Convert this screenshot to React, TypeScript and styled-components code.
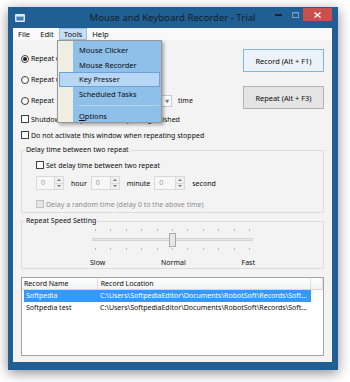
import React from "react";
import styled, { createGlobalStyle } from "styled-components";

const GlobalStyle = createGlobalStyle`
  html, body {
    margin: 0;
    padding: 0;
    background: #ffffff;
  }
  body {
    font-family: "Noto Sans", "Open Sans", "DejaVu Sans", sans-serif;
    font-size: 7px;
    color: #0c0c0c;
  }
  * {
    box-sizing: border-box;
  }
`;

const Page = styled.div`
  width: 350px;
  height: 382px;
  padding: 7px 0 0 8px;
  overflow: hidden;
`;

const Window = styled.div`
  width: 330px;
  height: 363px;
  display: flex;
  flex-direction: column;
  padding: 0 6px 8px 5px;
  background: #1f5f93;
  box-shadow: 0 3px 12px rgba(0, 0, 0, 0.45);
`;

const TitleBar = styled.div`
  height: 21px;
  flex-shrink: 0;
  display: grid;
  grid-template-columns: 1fr auto 1fr;
  align-items: center;
`;

const AppIcon = styled.svg`
  margin-left: 2px;
  display: block;
`;

const Title = styled.div`
  font-size: 9.6px;
  color: #16202a;
  white-space: nowrap;
`;

const Controls = styled.div`
  justify-self: end;
  align-self: start;
  margin-top: 1px;
  display: flex;
`;

const CtrlButton = styled.div<{ $close?: boolean; $w: number }>`
  width: ${(p) => p.$w}px;
  height: 13px;
  display: flex;
  align-items: center;
  justify-content: center;
  background: ${(p) => (p.$close ? "#c9504d" : "transparent")};
`;

const Client = styled.div`
  position: relative;
  flex: 1;
  min-height: 0;
  display: flex;
  flex-direction: column;
  background: #f3f3f3;
`;

const MenuBar = styled.div`
  height: 12px;
  flex-shrink: 0;
  display: flex;
  background: #f9f9f9;
  font-size: 7.6px;
  line-height: 12px;
`;

const MenuTitle = styled.div<{ $open?: boolean }>`
  padding: 0 5px;
  color: #0c0c0c;
  background: ${(p) => (p.$open ? "#c6def4" : "transparent")};
  box-shadow: ${(p) => (p.$open ? "inset 0 0 0 1px #99c3ea" : "none")};
`;

const Dropdown = styled.div`
  position: absolute;
  left: 44px;
  top: 12px;
  width: 105px;
  padding: 2px 0 0;
  border: 1px solid #979797;
  background: linear-gradient(to right, #f0eee0 15px, #8fc0ea 15px);
  box-shadow: 2px 2px 3px rgba(0, 0, 0, 0.3);
  z-index: 2;
  font-size: 7.5px;
`;

const DropItem = styled.div<{ $hot?: boolean; $h?: number }>`
  height: ${(p) => p.$h ?? 14.5}px;
  display: flex;
  align-items: center;
  margin: 0 1px;
  padding-left: 19px;
  color: #0c0c0c;
  white-space: nowrap;
  border: 1px solid ${(p) => (p.$hot ? "#6aa3da" : "transparent")};
  background: ${(p) => (p.$hot ? "#b8d7f4" : "transparent")};
`;

const DropSeparator = styled.div`
  height: 8px;
  display: flex;
  align-items: center;
  padding: 0 2px 0 19px;
  &::after {
    content: "";
    flex: 1;
    height: 1px;
    background: #b4d3ef;
  }
`;

const Content = styled.div`
  flex: 1;
  min-height: 0;
  display: flex;
  flex-direction: column;
  padding: 8px 8px 6px;
`;

const TopRow = styled.div`
  display: flex;
  height: 63px;
`;

const OptionColumn = styled.div`
  flex: 1;
  display: flex;
  flex-direction: column;
`;

const OptionRow = styled.div`
  height: 21px;
  display: flex;
  align-items: center;
  white-space: nowrap;
`;

const Radio = styled.span<{ $checked?: boolean }>`
  width: 8px;
  height: 8px;
  margin-right: 2px;
  border-radius: 50%;
  border: 1px solid #3a3a3a;
  background: #fff;
  display: flex;
  align-items: center;
  justify-content: center;
  flex-shrink: 0;
  &::after {
    content: "";
    width: 4px;
    height: 4px;
    border-radius: 50%;
    background: ${(p) => (p.$checked ? "#1a1a1a" : "transparent")};
  }
`;

const Combo = styled.div`
  width: 112px;
  height: 12px;
  margin: 0 6px;
  border: 1px solid #c9c9c9;
  background: #fff;
  display: flex;
  justify-content: flex-end;
  align-items: center;
  padding-right: 2px;
  color: #777;
  font-size: 5px;
`;

const ButtonColumn = styled.div`
  width: 81px;
  display: flex;
  flex-direction: column;
  gap: 14px;
  padding-top: 1px;
`;

const PushButton = styled.div<{ $focused?: boolean }>`
  height: 23px;
  display: flex;
  align-items: center;
  justify-content: center;
  font-size: 7.4px;
  border: 1px solid ${(p) => (p.$focused ? "#80b5e6" : "#b3b3b3")};
  background: ${(p) => (p.$focused ? "#ebf2f9" : "#e4e4e4")};
  color: #0c0c0c;
  white-space: nowrap;
`;

const CheckRow = styled.div<{ $h?: number; $disabled?: boolean }>`
  height: ${(p) => p.$h ?? 16}px;
  display: flex;
  align-items: center;
  white-space: nowrap;
  color: ${(p) => (p.$disabled ? "#8e8e8e" : "#0c0c0c")};
`;

const CheckBox = styled.span<{ $disabled?: boolean }>`
  width: 8px;
  height: 8px;
  margin-right: 2px;
  flex-shrink: 0;
  border: 1px solid ${(p) => (p.$disabled ? "#c2c2c2" : "#3f3f3f")};
  background: ${(p) => (p.$disabled ? "#e6e6e6" : "#fff")};
`;

const Group = styled.fieldset<{ $gap: number }>`
  margin: ${(p) => p.$gap}px 0 0;
  padding: 0;
  border: 1px solid #dcdcdc;
  min-width: 0;
`;

const Legend = styled.legend`
  margin-left: 3px;
  padding: 0 1px;
  line-height: 10px;
`;

const DelayBody = styled.div`
  padding: 3px 0 1px 14px;
  display: flex;
  flex-direction: column;
`;

const SpinRow = styled.div`
  height: 14px;
  margin: 4px 0 7px;
  display: flex;
  align-items: center;
`;

const Spin = styled.div<{ $w: number }>`
  width: ${(p) => p.$w}px;
  height: 14px;
  display: flex;
  border: 1px solid #d9d9d9;
  background: #f7f7f7;
`;

const SpinValue = styled.div`
  flex: 1;
  padding-left: 4px;
  line-height: 12px;
  color: #9a9a9a;
`;

const SpinArrows = styled.div`
  width: 9px;
  display: flex;
  flex-direction: column;
  border-left: 1px solid #d9d9d9;
  background: #efefef;
`;

const SpinHalf = styled.div<{ $top?: boolean }>`
  flex: 1;
  display: flex;
  align-items: center;
  justify-content: center;
  border-bottom: ${(p) => (p.$top ? "1px solid #d9d9d9" : "none")};
`;

const Unit = styled.span`
  margin: 0 4px 0 7px;
`;

const SpeedBody = styled.div`
  padding: 3px 0 0 70px;
`;

const Slider = styled.div`
  width: 161px;
  position: relative;
`;

const Ticks = styled.div`
  height: 2px;
  padding: 0 3px;
  display: flex;
  justify-content: space-between;
  & > span {
    width: 1px;
    height: 2px;
    background: #b9b9b9;
  }
`;

const TrackArea = styled.div`
  height: 17px;
  display: flex;
  align-items: center;
`;

const Track = styled.div`
  flex: 1;
  height: 3px;
  background: #e7e7e7;
  border: 1px solid #d4d4d4;
`;

const Thumb = styled.div`
  position: absolute;
  top: 4px;
  width: 7px;
  height: 14px;
  border: 1px solid #a9a9a9;
  background: #e8e8e8;
`;

const SpeedLabels = styled.div`
  width: 165px;
  margin: 8px 0 0 -2px;
  line-height: 10px;
  display: flex;
  justify-content: space-between;
`;

const ListView = styled.div`
  flex: 1;
  margin-top: 8px;
  border: 1px solid #a3a3a3;
  background: #fff;
`;

const Header = styled.div`
  height: 12px;
  display: flex;
  background: linear-gradient(#ffffff, #f1f2f4);
  border-bottom: 1px solid #d7d7d7;
`;

const HeadCell = styled.div<{ $w: number; $pad: number }>`
  width: ${(p) => p.$w}px;
  padding-left: ${(p) => p.$pad}px;
  line-height: 11px;
  border-right: 1px solid #e0e0e0;
  white-space: nowrap;
`;

const Row = styled.div<{ $selected?: boolean }>`
  width: 287px;
  height: 12px;
  margin-left: 2px;
  display: flex;
  line-height: 12px;
  white-space: nowrap;
  background: ${(p) => (p.$selected ? "#3399ff" : "transparent")};
  color: ${(p) => (p.$selected ? "#ffffff" : "#0c0c0c")};
`;

const Cell = styled.div<{ $w: number; $pad: number }>`
  width: ${(p) => p.$w}px;
  padding-left: ${(p) => p.$pad}px;
  overflow: hidden;
`;

const records = [
  { name: "Softpedia", path: "C:\\Users\\SoftpediaEditor\\Documents\\RobotSoft\\Records\\Soft..." },
  { name: "Softpedia test", path: "C:\\Users\\SoftpediaEditor\\Documents\\RobotSoft\\Records\\Soft..." },
];

const speed = 5;

const SpinBox = ({ w }: { w: number }) => (
  <Spin $w={w}>
    <SpinValue>0</SpinValue>
    <SpinArrows>
      <SpinHalf $top>
        <svg width="4" height="2" viewBox="0 0 4 2">
          <path d="M0 2 L2 0 L4 2 Z" fill="#777" />
        </svg>
      </SpinHalf>
      <SpinHalf>
        <svg width="4" height="2" viewBox="0 0 4 2">
          <path d="M0 0 L2 2 L4 0 Z" fill="#777" />
        </svg>
      </SpinHalf>
    </SpinArrows>
  </Spin>
);

export default function App() {
  return (
    <Page>
      <GlobalStyle />
      <Window>
        <TitleBar>
          <AppIcon width="10" height="8" viewBox="0 0 10 8">
            <rect x="0" y="0" width="10" height="8" rx="1" fill="#dfeaf4" />
            <rect x="1.5" y="2" width="7" height="4.5" fill="#3d7fb4" />
            <rect x="1.5" y="2" width="7" height="1" fill="#9fc2de" />
          </AppIcon>
          <Title>Mouse and Keyboard Recorder - Trial</Title>
          <Controls>
            <CtrlButton $w={17}>
              <svg width="7" height="2" viewBox="0 0 7 2">
                <rect width="7" height="2" fill="#1b2530" />
              </svg>
            </CtrlButton>
            <CtrlButton $w={16}>
              <svg width="7" height="6" viewBox="0 0 7 6">
                <rect x="0.5" y="0.5" width="6" height="5" fill="none" stroke="#7f9db8" />
                <rect x="0.5" y="0.5" width="6" height="1" fill="#7f9db8" />
              </svg>
            </CtrlButton>
            <CtrlButton $w={29} $close>
              <svg width="7" height="6" viewBox="0 0 7 6">
                <path d="M0.5 0.5 L6.5 5.5 M6.5 0.5 L0.5 5.5" stroke="#ffffff" strokeWidth="1.4" />
              </svg>
            </CtrlButton>
          </Controls>
        </TitleBar>

        <Client>
          <MenuBar>
            <MenuTitle>File</MenuTitle>
            <MenuTitle>Edit</MenuTitle>
            <MenuTitle $open>Tools</MenuTitle>
            <MenuTitle>Help</MenuTitle>
          </MenuBar>

          <Dropdown>
            <DropItem>Mouse Clicker</DropItem>
            <DropItem>Mouse Recorder</DropItem>
            <DropItem $hot>Key Presser</DropItem>
            <DropItem>Scheduled Tasks</DropItem>
            <DropSeparator />
            <DropItem $h={13}>
              <span>
                <u>O</u>ptions
              </span>
            </DropItem>
          </Dropdown>

          <Content>
            <TopRow>
              <OptionColumn>
                <OptionRow>
                  <Radio $checked />
                  Repeat once
                </OptionRow>
                <OptionRow>
                  <Radio />
                  Repeat until stopped
                </OptionRow>
                <OptionRow>
                  <Radio />
                  Repeat
                  <Combo>▼</Combo>
                  time
                </OptionRow>
              </OptionColumn>
              <ButtonColumn>
                <PushButton $focused>Record (Alt + F1)</PushButton>
                <PushButton>Repeat (Alt + F3)</PushButton>
              </ButtonColumn>
            </TopRow>

            <CheckRow>
              <CheckBox />
              Shutdown computer when repeating finished
            </CheckRow>
            <CheckRow>
              <CheckBox />
              Do not activate this window when repeating stopped
            </CheckRow>

            <Group $gap={2}>
              <Legend>Delay time between two repeat</Legend>
              <DelayBody>
                <CheckRow $h={14}>
                  <CheckBox />
                  Set delay time between two repeat
                </CheckRow>
                <SpinRow>
                  <SpinBox w={28} />
                  <Unit>hour</Unit>
                  <SpinBox w={29} />
                  <Unit>minute</Unit>
                  <SpinBox w={31} />
                  <Unit>second</Unit>
                </SpinRow>
                <CheckRow $h={14} $disabled>
                  <CheckBox $disabled />
                  Delay a random time (delay 0 to the above time)
                </CheckRow>
              </DelayBody>
            </Group>

            <Group $gap={3}>
              <Legend>Repeat Speed Setting</Legend>
              <SpeedBody>
                <Slider>
                  <Ticks>
                    {Array.from({ length: 11 }, (_, i) => (
                      <span key={i} />
                    ))}
                  </Ticks>
                  <TrackArea>
                    <Track />
                  </TrackArea>
                  <Thumb style={{ left: (speed / 10) * 154 }} />
                  <Ticks>
                    {Array.from({ length: 11 }, (_, i) => (
                      <span key={i} />
                    ))}
                  </Ticks>
                </Slider>
                <SpeedLabels>
                  <span>Slow</span>
                  <span>Normal</span>
                  <span>Fast</span>
                </SpeedLabels>
              </SpeedBody>
            </Group>

            <ListView>
              <Header>
                <HeadCell $w={76} $pad={2}>Record Name</HeadCell>
                <HeadCell $w={214} $pad={3}>Record Location</HeadCell>
                <HeadCell $w={12} $pad={0} />
              </Header>
              {records.map((r, i) => (
                <Row key={r.name} $selected={i === 0}>
                  <Cell $w={73} $pad={2}>{r.name}</Cell>
                  <Cell $w={214} $pad={3}>{r.path}</Cell>
                </Row>
              ))}
            </ListView>
          </Content>
        </Client>
      </Window>
    </Page>
  );
}
